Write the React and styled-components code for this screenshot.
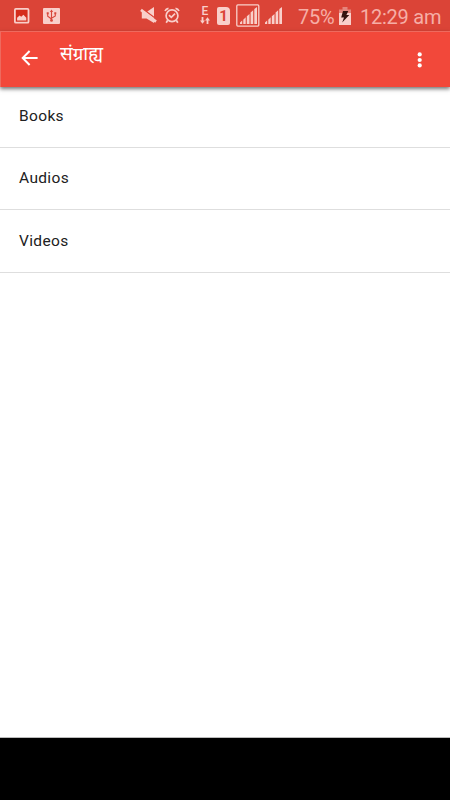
import React from "react";
import styled, { createGlobalStyle } from "styled-components";

const categories = ["Books", "Audios", "Videos"];

function ImageIcon() {
  return (
    <Icon width="16" height="16" gap={14}>
      <rect x="0.9" y="0.9" width="13.6" height="13.8" rx="1" fill="#d52c1c" stroke="#f9cfca" strokeWidth="1.8" />
      <path d="M3.1 12.4V9.8L5.6 7.6L7.2 8.8L9.4 6.8L12.3 9.8V12.4Z" fill="#f9cfca" />
    </Icon>
  );
}

function UsbIcon() {
  return (
    <Icon width="17" height="16" gap={13}>
      <rect width="17" height="16" rx="1" fill="#f9cfca" />
      <path d="M8.5 3.2V12M4.7 5.5V8.2L8.5 11M12.3 5.5V8L8.5 10.2" stroke="#d8473b" strokeWidth="1.1" fill="none" />
      <path d="M6.9 4L8.5 1.6L10.1 4ZM3.7 4.3H5.7V6.3H3.7ZM11.3 4.3H13.3V6.3H11.3Z" fill="#d8473b" />
      <circle cx="8.5" cy="12.4" r="1.4" fill="#d8473b" />
    </Icon>
  );
}

function MuteIcon() {
  return (
    <Icon width="17" height="17" gap={80}>
      <path d="M7.3 4.5L14 0V9.6Z" fill="#f9cfca" />
      <path d="M1.8 4.5L5 4.5L14 11V16L6.5 11.4H1.8Z" fill="#f9cfca" />
      <path d="M1 2.9L16 14.6" stroke="#f9cfca" strokeWidth="2.6" />
    </Icon>
  );
}

function AlarmIcon() {
  return (
    <Icon width="16" height="17" gap={7}>
      <g stroke="#f9cfca" fill="none" strokeWidth="1.7">
        <circle cx="8" cy="8.8" r="5.9" />
        <path d="M1 4Q2 1.6 4.5 1.3M11.5 1.3Q14 1.6 15 4M3.7 13.3L2.2 15.8M12.3 13.3L13.8 15.8" />
        <path d="M5 8.2L7.3 10.3L11 6.6" />
      </g>
    </Icon>
  );
}

function DataArrowsIcon() {
  return (
    <svg width="10" height="7">
      <path d="M2.5 0V4M7.5 7V3" stroke="#f9cfca" strokeWidth="1.8" />
      <path d="M0 3.4H5L2.5 6.8ZM5 3.6H10L7.5 0.2Z" fill="#f9cfca" />
    </svg>
  );
}

function SignalBars() {
  return (
    <g fill="#f9cfca">
      <path d="M0 17V15.5L2.2 13.5V17Z" />
      <path d="M3.3 17V12.7L5.7 10.3V17Z" />
      <path d="M6.8 17V9.2L9.5 7V17Z" />
      <path d="M10.6 17V5.6L13.2 3.2V17Z" />
      <path d="M14.3 17V2L17 0V17Z" />
    </g>
  );
}

function BatteryIcon() {
  return (
    <Icon width="12" height="18" gap={5}>
      <path d="M3.5 0H8.5V2.5H12V9H0V2.5H3.5Z" fill="#e5857c" />
      <rect y="6" width="12" height="12" fill="#f9cfca" />
      <path d="M4 4H9.3L7.4 8H10.3L3.2 15.5L5 10.5H2.2Z" fill="#35130f" />
    </Icon>
  );
}

function App() {
  return (
    <Screen>
      <GlobalStyle />
      <StatusBar>
        <ImageIcon />
        <UsbIcon />
        <MuteIcon />
        <AlarmIcon />
        <Network>
          <span>E</span>
          <DataArrowsIcon />
        </Network>
        <Sim>1</Sim>
        <Icon width="24" height="23" gap={6}>
          <rect x="0.8" y="0.9" width="22" height="21.2" rx="1" fill="none" stroke="#f9cfca" strokeWidth="1.3" />
          <g transform="translate(4 3)">
            <SignalBars />
          </g>
        </Icon>
        <Icon width="17" height="17" gap={5}>
          <SignalBars />
        </Icon>
        <StatusText gap={16} width={36}>75%</StatusText>
        <BatteryIcon />
        <StatusText gap={9} width={82}>12:29 am</StatusText>
      </StatusBar>
      <Toolbar>
        <BackButton aria-label="Back">
          <svg width="18" height="16" fill="none" stroke="#fff" strokeWidth="2">
            <path d="M16.6 8H2.2M8.6 1L1.7 8L8.6 15" />
          </svg>
        </BackButton>
        <Title>संग्राह्य</Title>
        <MenuButton aria-label="More options">
          <svg width="6" height="16" fill="#fff">
            <circle cx="2.7" cy="2.4" r="2.1" />
            <circle cx="2.7" cy="8" r="2.1" />
            <circle cx="2.7" cy="13.4" r="2.1" />
          </svg>
        </MenuButton>
      </Toolbar>
      <List>
        {categories.map((name) => (
          <Row key={name}>{name}</Row>
        ))}
      </List>
      <BottomBar />
    </Screen>
  );
}

export default App;

const GlobalStyle = createGlobalStyle`
  * {
    box-sizing: border-box;
  }
  body {
    margin: 0;
    font-family: Roboto, "Noto Sans", sans-serif;
  }
`;
const Screen = styled.div`
  display: flex;
  flex-direction: column;
  width: 450px;
  height: 800px;
  overflow: hidden;
  background: #fff;
`;
const StatusBar = styled.div`
  display: flex;
  align-items: center;
  height: 31px;
  flex-shrink: 0;
  background: #db4437;
  color: #f9cfca;
`;
const Icon = styled.svg.withConfig({
  shouldForwardProp: (prop) => prop !== "gap",
})`
  flex-shrink: 0;
  margin-left: ${(props) => props.gap}px;
`;
const Network = styled.div`
  display: flex;
  flex-direction: column;
  align-items: center;
  width: 10px;
  margin-left: 20px;
  padding-bottom: 1px;
  font-size: 12px;
  line-height: 11px;
  font-weight: 500;
`;
const Sim = styled.div`
  width: 13px;
  height: 18px;
  margin-left: 7px;
  border-radius: 2px 4px 2px 2px;
  background: #f9cfca;
  color: #db4437;
  font-size: 15px;
  font-weight: 700;
  line-height: 18px;
  text-align: center;
`;
const StatusText = styled.span.withConfig({
  shouldForwardProp: (prop) => prop !== "gap" && prop !== "width",
})`
  width: ${(props) => props.width}px;
  margin-left: ${(props) => props.gap}px;
  padding-top: 2px;
  color: #f6aea6;
  font-size: 20px;
  letter-spacing: -0.25px;
  line-height: 24px;
  white-space: nowrap;
`;
const Toolbar = styled.header`
  display: flex;
  align-items: center;
  height: 56px;
  flex-shrink: 0;
  z-index: 1;
  padding: 0 27px 0 20px;
  border-top: 1px solid #ee6a5e;
  border-left: 1px solid #ee6a5e;
  background: #f2483a;
  box-shadow: 0 2px 4px rgba(0, 0, 0, 0.55);
`;
const BackButton = styled.button`
  display: flex;
  padding: 0;
  border: 0;
  background: none;
  margin-top: -3px;
`;
const Title = styled.h1`
  flex: 1;
  margin: 0 0 12px 21px;
  color: #fff;
  font-size: 18.8px;
  font-weight: 400;
  line-height: 30px;
`;
const MenuButton = styled(BackButton)`
  margin-top: 0;
`;
const List = styled.ul`
  flex: 1;
  margin: 0;
  padding: 0;
  list-style: none;
  border-bottom: 1px solid #bbb;
`;
const Row = styled.li`
  display: flex;
  align-items: center;
  height: 62.4px;
  padding: 0 19px 1px;
  border-bottom: 1px solid #dedede;
  color: #212121;
  font-size: 15.5px;
  letter-spacing: 0.35px;

  &:first-child {
    height: 61px;
    padding-bottom: 2px;
  }
`;
const BottomBar = styled.div`
  height: 62px;
  flex-shrink: 0;
  background: #000;
`;
